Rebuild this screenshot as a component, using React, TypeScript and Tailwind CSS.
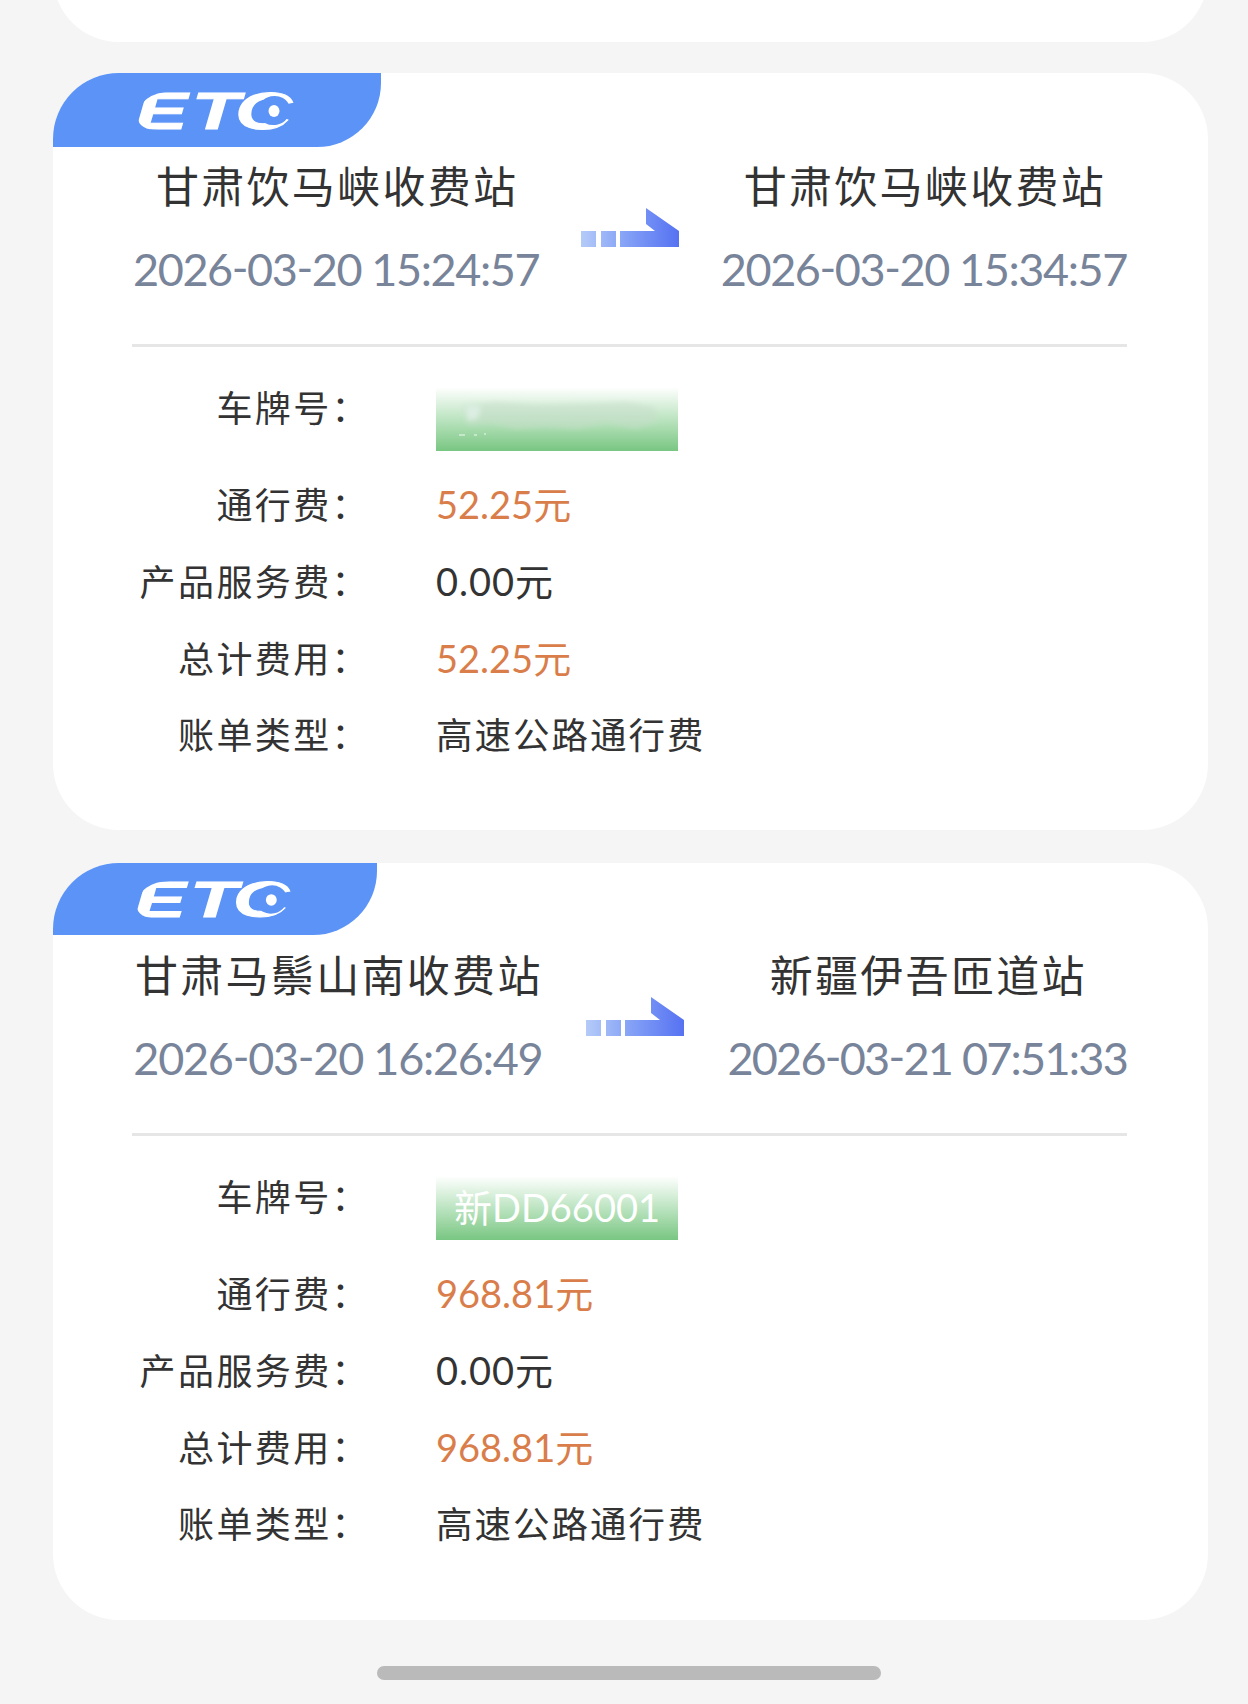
import clsx from 'clsx'

type Stop = { station: string; time: string; tracking: string }

type Bill = {
  id: number
  from: Stop
  to: Stop
  plate: string | null
  toll: string
  serviceFee: string
  total: string
  type: string
}

const bills: Bill[] = [
  {
    id: 1,
    from: { station: '甘肃饮马峡收费站', time: '2026-03-20 15:24:57', tracking: 'tracking-[-1.4px]' },
    to: { station: '甘肃饮马峡收费站', time: '2026-03-20 15:34:57', tracking: 'tracking-[-1.4px]' },
    plate: null,
    toll: '52.25元',
    serviceFee: '0.00元',
    total: '52.25元',
    type: '高速公路通行费',
  },
  {
    id: 2,
    from: { station: '甘肃马鬃山南收费站', time: '2026-03-20 16:26:49', tracking: 'tracking-[-1.25px]' },
    to: { station: '新疆伊吾匝道站', time: '2026-03-21 07:51:33', tracking: 'tracking-[-1.75px]' },
    plate: '新DD66001',
    toll: '968.81元',
    serviceFee: '0.00元',
    total: '968.81元',
    type: '高速公路通行费',
  },
]

function EtcTab({ small }: { small: boolean }) {
  return (
    <div
      className={clsx(
        'rounded-tl-[66px] rounded-br-[64px] bg-[#5b93f7]',
        small ? 'h-[72px] w-[324px]' : 'h-[74px] w-[328px]',
      )}
    >
      <svg viewBox="0 0 328 74" className="h-full w-full" preserveAspectRatio="none" role="img" aria-label="ETC">
        <defs>
          <clipPath id="etc-round">
            <path d="M118 18.5H260V57H106Q85 57 85 44Q87 20 118 18.5Z" />
          </clipPath>
        </defs>
        <g clipPath="url(#etc-round)">
          <text
            transform="scale(1.5 1)"
            x="55 92.5 121.5"
            y="56"
            fill="#fff"
            stroke="#fff"
            strokeWidth="1"
            className="font-['Liberation_Sans',sans-serif] text-[52px] font-bold italic"
          >
            ETC
          </text>
        </g>
        {/* hollow of the C with the tag dot inside */}
        <ellipse cx="221" cy="37.5" rx="16" ry="14.5" fill="#5b93f7" transform="rotate(-12 221 37.5)" />
        <ellipse cx="221" cy="38" rx="5.5" ry="6" fill="#fff" />
      </svg>
    </div>
  )
}

function Arrow({ id }: { id: number }) {
  return (
    <svg viewBox="0 0 98 39" className="mt-[61px] h-[39px] w-[98px] shrink-0" aria-hidden>
      <defs>
        <linearGradient id={`arrow-${id}`} gradientUnits="userSpaceOnUse" x1="0" y1="0" x2="98" y2="0">
          <stop offset="0" stopColor="#b4cbf8" />
          <stop offset="0.5" stopColor="#809df6" />
          <stop offset="1" stopColor="#5672f2" />
        </linearGradient>
      </defs>
      <path d="M0 23H15V39H0ZM20 23H35V39H20ZM39 23H74L65 16V0L98 23V39H39Z" fill={`url(#arrow-${id})`} />
    </svg>
  )
}

function StopInfo({ stop }: { stop: Stop }) {
  return (
    <div className="flex flex-col items-center whitespace-nowrap">
      <p className="mt-[7px] h-[60px] pl-[2px] text-[43px] leading-[60px] tracking-[2.3px] text-[#333]">{stop.station}</p>
      <p
        className={clsx(
          "mt-[25px] h-[60px] font-['Lato','Noto_Sans_CJK_SC',sans-serif] text-[45px] leading-[60px] text-[#78849a] [font-feature-settings:'case']",
          stop.tracking,
        )}
      >
        {stop.time}
      </p>
    </div>
  )
}

function Plate({ plate }: { plate: string | null }) {
  return (
    <div className="flex h-[64px] w-[242px] items-center justify-center overflow-hidden bg-linear-to-b from-white via-[#bce4c1] to-[#78c682]">
      {plate ? (
        <span className="-mt-[2px] font-['Lato','Noto_Sans_CJK_SC',sans-serif] text-[38px] leading-none whitespace-nowrap text-white">
          {plate}
        </span>
      ) : (
        <svg viewBox="0 0 242 64" className="h-full w-full" aria-hidden>
          <defs>
            <filter id="smudge">
              <feGaussianBlur stdDeviation="2.5" />
            </filter>
          </defs>
          <g filter="url(#smudge)">
            <path
              d="M26 18L60 15L100 18L150 17L190 15L218 20L222 34L200 42L170 36L142 42L110 40L80 42L55 36L32 38Z"
              fill="#c7dfcb"
              opacity="0.55"
            />
            <path d="M29 18L45 19L42 31L32 34Z" fill="#dceee2" />
          </g>
          <path d="M23 48h6M38 48h3M48 47h2" stroke="#d4eed8" strokeWidth="1.5" />
        </svg>
      )}
    </div>
  )
}

function RowLabel({ children }: { children: string }) {
  return (
    <span className="mr-[66px] w-[317px] shrink-0 text-right text-[36px] leading-[52px] tracking-[2.4px] text-[#333]">
      {children}：
    </span>
  )
}

function Row({ label, value, className }: { label: string; value: string; className: string }) {
  return (
    <div className="flex h-[76.7px] items-center">
      <RowLabel>{label}</RowLabel>
      <span className={clsx("mt-[2px] font-['Lato','Noto_Sans_CJK_SC',sans-serif] leading-none", className)}>{value}</span>
    </div>
  )
}

function BillCard({ bill, small }: { bill: Bill; small: boolean }) {
  return (
    <section className="h-[757px] w-[1155px] rounded-[66px] bg-white">
      <EtcTab small={small} />
      <div className={clsx('flex h-[197px] justify-between pr-[81px] pl-[80px]', small && 'mt-px')}>
        <StopInfo stop={bill.from} />
        <Arrow id={bill.id} />
        <StopInfo stop={bill.to} />
      </div>
      <div className="mr-[81px] ml-[79px] h-[3px] bg-[#e6e6e6]" />
      <div className="mt-[33px] flex h-[85px] items-start">
        <RowLabel>车牌号</RowLabel>
        <div className="mt-[7px]">
          <Plate plate={bill.plate} />
        </div>
      </div>
      <Row label="通行费" value={bill.toll} className="text-[38px] text-[#d97e4b]" />
      <Row label="产品服务费" value={bill.serviceFee} className="text-[38px] tracking-[1px] text-[#333]" />
      <Row label="总计费用" value={bill.total} className="text-[38px] text-[#d97e4b]" />
      <Row label="账单类型" value={bill.type} className="pt-[2px] text-[36.5px] tracking-[2px] text-[#333]" />
    </section>
  )
}

export default function App() {
  return (
    <main className="flex h-[1704px] w-[1248px] flex-col overflow-hidden bg-[#f5f5f5] pl-[53px] font-['Noto_Sans_CJK_SC',sans-serif]">
      <div className="flex h-[42px] w-[1155px] shrink-0 flex-col justify-end overflow-hidden">
        <div className="h-[140px] shrink-0 rounded-[66px] bg-white" />
      </div>
      <div className="mt-[31px] flex flex-col gap-[33px]">
        {bills.map((bill, index) => (
          <BillCard key={bill.id} bill={bill} small={index > 0} />
        ))}
      </div>
      <div className="mt-[46px] ml-[324px] h-[14px] w-[504px] shrink-0 rounded-full bg-[#bababa]" />
    </main>
  )
}
